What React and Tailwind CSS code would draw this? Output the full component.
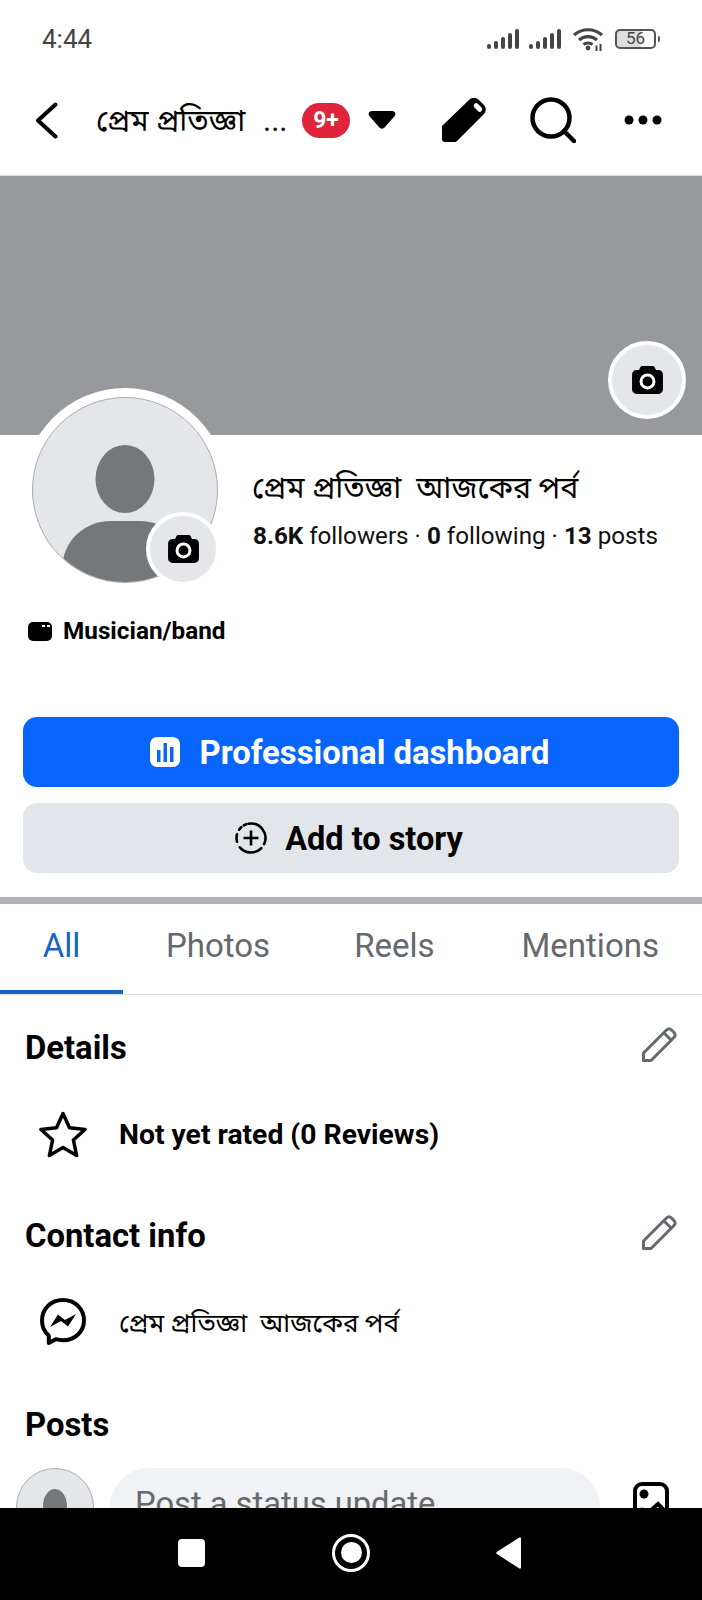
const bn = "font-['Roboto','Noto_Sans_Bengali','Lohit_Bengali','FreeSans','Noto_Sans',sans-serif]";

function Signal() {
  return (
    <svg width="33" height="20" viewBox="0 0 33 20" fill="#444">
      <rect x="0" y="15" width="4" height="5" rx="2" />
      <rect x="7" y="12" width="4" height="8" rx="2" />
      <rect x="14" y="8" width="4" height="12" rx="2" />
      <rect x="21" y="4" width="4" height="16" rx="2" />
      <rect x="28" y="0" width="4" height="20" rx="2" />
    </svg>
  );
}

function Wifi() {
  return (
    <svg width="32" height="24" viewBox="0 0 32 24" fill="none" stroke="#444" strokeWidth="3.200">
      <path d="M2 8c8-7 20-7 28 0" />
      <path d="M7 13c5-4.500 13-4.500 18 0" />
      <path d="M11.500 17.500c2.500-2 6.500-2 9 0" />
      <circle cx="16" cy="21" r="2.400" fill="#444" stroke="none" />
      <path d="M24.500 18.500v5.500M28.500 17v7" strokeWidth="2" />
    </svg>
  );
}

function Battery() {
  return (
    <div className="flex items-center">
      <div className="flex h-[20px] w-[41px] items-center justify-center rounded-[5px] border-2 border-[#555] bg-gradient-to-r from-[#dedede] from-[65%] to-white to-[65%] text-[17px] leading-none text-[#444]">
        56
      </div>
      <div className="ml-[2px] h-[6px] w-[2px] rounded-r-sm bg-[#555]" />
    </div>
  );
}

function Camera({ size = 31 }) {
  return (
    <svg width={size} height={size * 0.9} viewBox="0 0 31 28">
      <path d="M10.500 0h10c1 0 1.800.500 2.300 1.400L24 4h2.500A4.500 4.500 0 0 1 31 8.500v15a4.500 4.500 0 0 1-4.500 4.500h-22A4.500 4.500 0 0 1 0 23.500v-15A4.500 4.500 0 0 1 4.500 4H7l1.200-2.600C8.700.500 9.500 0 10.500 0z" fill="#000" />
      <circle cx="15.500" cy="15.500" r="6.500" fill="none" stroke="#fff" strokeWidth="3" />
    </svg>
  );
}

function EditOutline() {
  return (
    <svg width="36" height="36" viewBox="0 0 36 36" fill="none" stroke="#65686c" strokeWidth="3" strokeLinejoin="round">
      <path d="M2.500 33.500v-7.500L25.500 3c1.500-1.500 3.500-1.500 5 0l2.500 2.500c1.500 1.500 1.500 3.500 0 5L10 33.500z" />
      <path d="M23 6l7.500 7.500" />
    </svg>
  );
}

function DefaultAvatar({ className, head, body }) {
  return (
    <div className={`relative overflow-hidden rounded-full border border-[#a9abae] bg-[#e4e6e9] ${className}`}>
      <div className={`absolute left-1/2 -translate-x-1/2 rounded-[50%] bg-[#75787b] ${head}`} />
      <div className={`absolute left-1/2 -translate-x-1/2 rounded-t-[48px] bg-[#75787b] ${body}`} />
    </div>
  );
}

function StatusBar() {
  return (
    <div className="flex h-[77px] shrink-0 items-center justify-between px-[42px]">
      <span className="text-[26px] leading-none text-[#444]">4:44</span>
      <div className="flex items-center">
        <Signal />
        <div className="w-[9px]" />
        <Signal />
        <div className="w-[10px]" />
        <Wifi />
        <div className="w-[11px]" />
        <Battery />
      </div>
    </div>
  );
}

function TopBar() {
  return (
    <div className="flex h-[99px] shrink-0 items-center border-b border-[#d9dadc] pb-[12px]">
      <svg className="ml-[35px]" width="23" height="37" viewBox="0 0 23 37" fill="none" stroke="#000" strokeWidth="4" strokeLinecap="round" strokeLinejoin="round">
        <path d="M20.500 2.500L3 18.500l17.500 16" />
      </svg>
      <div className={`ml-[38px] w-[167px] whitespace-nowrap pt-[2px] text-[30.300px] leading-none text-black ${bn}`}>প্রেম প্রতিজ্ঞা</div>
      <span className="w-[23px] text-[31px] leading-none text-black">...</span>
      <div className="ml-[16px] flex h-[35px] w-[48px] items-center justify-center rounded-full bg-[#e0243c] text-[23px] font-bold leading-none text-white">9+</div>
      <svg className="ml-[18px]" width="28" height="18" viewBox="0 0 28 18" fill="#000">
        <path d="M4 0h20c3 0 4.500 3 2.500 5.200L17 16c-1.700 2.200-4.300 2.200-6 0L1.500 5.200C-.5 3 1 0 4 0z" />
      </svg>
      <svg className="ml-[46px]" width="44" height="44" viewBox="0 0 44 44" fill="#000">
        <path d="M0 28L27 2c3-3 7-3 10 0l4.500 4.500c3 3 3 7 0 10L15 43c-1 1-2 1-3 1H3c-2 0-3-1-3-3z" />
        <rect x="31" y="7" width="10" height="5" rx="2.500" fill="#fff" transform="rotate(45 36 9.500)" />
      </svg>
      <svg className="ml-[44px]" width="46" height="46" viewBox="0 0 46 46" fill="none" stroke="#000" strokeWidth="4.500" strokeLinecap="round">
        <circle cx="21" cy="21" r="18.500" />
        <path d="M34 34l10 10" />
      </svg>
      <svg className="ml-[48px]" width="38" height="10" viewBox="0 0 38 10" fill="#000">
        <circle cx="5" cy="5" r="4.500" />
        <circle cx="19" cy="5" r="4.500" />
        <circle cx="33" cy="5" r="4.500" />
      </svg>
    </div>
  );
}

function ProfileHeader() {
  return (
    <div className="relative">
      <div className="relative h-[259px] bg-[#97999d]">
        <div className="absolute left-[608px] top-[165px] flex h-[78px] w-[78px] items-center justify-center rounded-full border-4 border-white bg-[#e4e6e9]">
          <Camera />
        </div>
      </div>
      <div className="flex h-[282px] flex-col pl-[28px]">
        <div className="flex">
          <div className="relative -mt-[47px] ml-[-5px] h-[204px] w-[204px] shrink-0 rounded-full bg-white p-[9px]">
            <DefaultAvatar className="h-[186px] w-[186px]" head="top-[47px] h-[68px] w-[59px]" body="top-[123px] h-[70px] w-[126px]" />
            <div className="absolute left-[123px] top-[124px] flex h-[74px] w-[74px] items-center justify-center rounded-full border-4 border-white bg-[#e4e6e9]">
              <Camera />
            </div>
          </div>
          <div className="ml-[25px] pt-[36px]">
            <div className={`whitespace-pre text-[30.300px] leading-[34px] text-black ${bn}`}>প্রেম প্রতিজ্ঞা  আজকের পর্ব</div>
            <div className="mt-[16px] whitespace-nowrap pl-[1px] text-[24.200px] leading-[30px] text-[#111]">
              <b className="font-bold">8.6K</b> followers · <b className="font-bold">0</b> following · <b className="font-bold">13</b> posts
            </div>
          </div>
        </div>
        <div className="mt-[24px] flex items-center">
          <svg width="24" height="19" viewBox="0 0 24 19" fill="#000">
            <rect width="24" height="19" rx="5" />
            <path d="M14 3h3v2h-3zM19 3h3v2h-3z" fill="#fff" />
          </svg>
          <span className="ml-[11px] text-[24.300px] font-bold leading-[30px] text-black">Musician/band</span>
        </div>
      </div>
    </div>
  );
}

function Actions() {
  return (
    <div className="flex flex-col gap-[16px] px-[23px]">
      <button className="flex h-[70px] items-center justify-center rounded-[14px] bg-[#0866ff] pr-[3px] text-[32.800px] font-bold text-white">
        <svg width="30" height="30" viewBox="0 0 30 30">
          <rect width="30" height="30" rx="7" fill="#fff" />
          <path d="M7 13h3.500v12H7zM13.500 6H17v19h-3.500zM20 10h3.500v15H20z" fill="#0866ff" />
        </svg>
        <span className="ml-[20px] pt-[2px] leading-none">Professional dashboard</span>
      </button>
      <button className="flex h-[70px] items-center justify-center rounded-[14px] bg-[#e2e5e9] pr-[4px] text-[32.500px] font-bold text-black">
        <svg width="32" height="32" viewBox="0 0 32 32" fill="none" stroke="#000" strokeWidth="2.600" strokeLinecap="round">
          <path d="M13.500 1.700A14.500 14.500 0 0 1 29.100 22.100" />
          <path d="M26.250 26.250A14.500 14.500 0 0 1 4.900 25.300" />
          <path d="M2 19.750A14.500 14.500 0 0 1 2 12.250" />
          <path d="M4.100 7.700A14.500 14.500 0 0 1 6.300 5.200" />
          <path d="M8.750 3.440A14.500 14.500 0 0 1 11.500 2.200" />
          <path d="M16 8.500v15M8.500 16h15" strokeLinecap="butt" />
        </svg>
        <span className="ml-[18px] pt-[2px] leading-none">Add to story</span>
      </button>
    </div>
  );
}

function Tabs() {
  return (
    <div className="mt-[24px] border-t-[7px] border-[#b0b2b7]">
      <div className="relative flex h-[91px] border-b border-[#dadde1] text-[33px] leading-none text-[#65686c]">
        <div className="flex w-[123px] items-center justify-center border-b-4 border-[#1565c0] pb-[3px] text-[#1565c0]">All</div>
        <div className="ml-[43px] flex items-center pb-[7px]">Photos</div>
        <div className="ml-[84px] flex items-center pb-[7px]">Reels</div>
        <div className="ml-[87px] flex items-center pb-[7px]">Mentions</div>
      </div>
    </div>
  );
}

function SectionHead({ title }) {
  return (
    <div className="flex h-[36px] items-center justify-between pl-[25px] pr-[25px]">
      <h2 className="pt-[6px] text-[32.800px] font-bold leading-none text-black">{title}</h2>
      <EditOutline />
    </div>
  );
}

function Details() {
  return (
    <div className="pt-[32px]">
      <SectionHead title="Details" />
      <div className="mt-[47px] flex h-[48px] items-center pl-[39px]">
        <svg width="48" height="47" viewBox="0 0 48 47" fill="none" stroke="#000" strokeWidth="3.500" strokeLinejoin="round">
          <path d="M24 2.500l6.500 14.300 15.500 1.700-11.600 10.500 3.200 15.500L24 36.600 10.400 44.500l3.200-15.500L2 18.500l15.500-1.700z" />
        </svg>
        <span className="ml-[32px] pt-[2px] text-[28.300px] font-bold leading-none text-black">Not yet rated (0 Reviews)</span>
      </div>
      <div className="mt-[57px]">
        <SectionHead title="Contact info" />
      </div>
      <div className="mt-[46px] flex h-[48px] items-center pl-[39px]">
        <svg width="48" height="48" viewBox="0 0 48 48">
          <path d="M24 3C12 3 3 11.800 3 23.500c0 6.300 2.500 11.500 6.800 15.200V46l7-3.800c2.200.7 4.600 1 7.200 1 12 0 21-8.800 21-19.700C45 11.800 36 3 24 3z" fill="none" stroke="#000" strokeWidth="4" strokeLinejoin="round" />
          <path d="M11 30l8-12.500 7 5.500 11-6-8 12.500-7-5.500z" fill="#000" />
        </svg>
        <span className={`ml-[32px] whitespace-pre pt-[4px] text-[26px] leading-none text-black ${bn}`}>প্রেম প্রতিজ্ঞা  আজকের পর্ব</span>
      </div>
      <h2 className="mt-[64px] pl-[25px] text-[32.800px] font-bold leading-none text-black">Posts</h2>
    </div>
  );
}

function Composer() {
  return (
    <div className="mt-[26px] flex items-start pl-[16px]">
      <DefaultAvatar className="h-[78px] w-[78px] shrink-0" head="top-[20px] h-[34px] w-[24px]" body="top-[58px] h-[30px] w-[50px]" />
      <div className="ml-[16px] flex h-[78px] w-[490px] items-center rounded-full bg-[#f0f2f5] pb-[5px] pl-[25px] text-[32.700px] leading-none text-[#65686c]">
        Post a status update
      </div>
      <svg className="ml-[33px] mt-[14px]" width="36" height="44" viewBox="0 0 36 44" fill="none">
        <rect x="2" y="2" width="32" height="40" rx="7" stroke="#000" strokeWidth="4" />
        <circle cx="11" cy="12" r="4.500" fill="#000" />
        <path d="M3 30c4-3 7-3 10-1l3 1 9-8 9 9" stroke="#000" strokeWidth="4" />
      </svg>
    </div>
  );
}

function NavBar() {
  return (
    <div className="relative z-10 flex h-[92px] shrink-0 items-center bg-black pb-[3px]">
      <div className="ml-[178px] h-[28px] w-[27px] rounded-[4px] bg-white" />
      <div className="ml-[127px] flex h-[38px] w-[38px] items-center justify-center rounded-full border-[3px] border-white">
        <div className="h-[21px] w-[21px] rounded-full bg-white" />
      </div>
      <svg className="ml-[126px]" width="26" height="32" viewBox="0 0 26 32" fill="#fff">
        <path d="M25 1.500v29c0 1-1 1.500-2 .8L1 17c-1-.6-1-1.500 0-2.200L23 .8c1-.7 2-.3 2 .7z" />
      </svg>
    </div>
  );
}

export default function App() {
  return (
    <div className="flex h-[1600px] w-[702px] flex-col overflow-hidden bg-white font-['Roboto',sans-serif]">
      <div className="h-[1508px] shrink-0 overflow-hidden">
        <StatusBar />
        <TopBar />
        <ProfileHeader />
        <Actions />
        <Tabs />
        <Details />
        <Composer />
      </div>
      <NavBar />
    </div>
  );
}
